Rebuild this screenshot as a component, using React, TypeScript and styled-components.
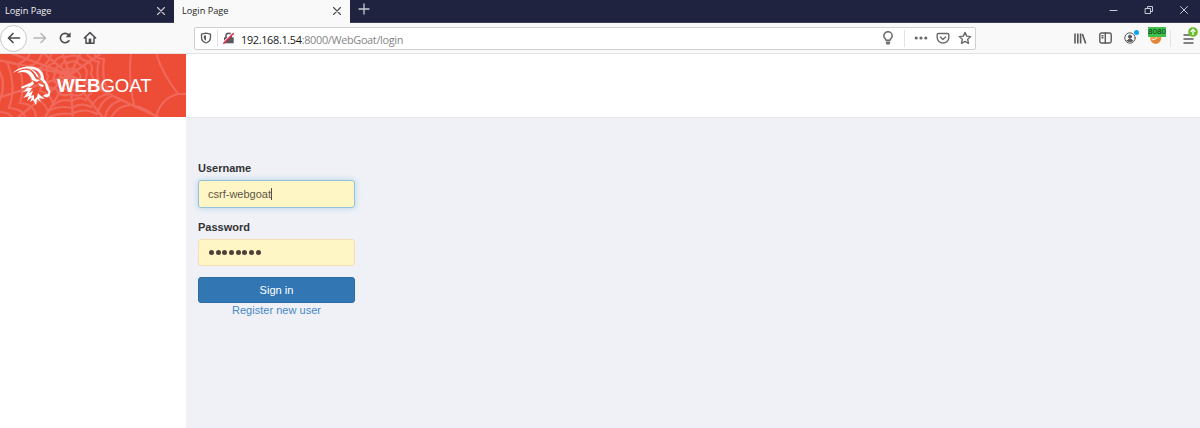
import React from 'react';
import styled, { createGlobalStyle } from 'styled-components';

const GlobalStyle = createGlobalStyle`
  *, *::before, *::after { box-sizing: border-box; }
  body { margin: 0; background: #fff; font-family: "Liberation Sans", Arial, sans-serif; }
  svg { display: block; flex: none; }
`;

const Window = styled.div`
  display: flex;
  flex-direction: column;
  width: 1200px;
  height: 428px;
  overflow: hidden;
`;

const TabBar = styled.div`
  display: flex;
  height: 23px;
  flex: none;
  background: #20233f;
  border-bottom: 1px solid #3c3e56;
`;

const Tab = styled.div<{ $active?: boolean }>`
  display: flex;
  align-items: center;
  justify-content: space-between;
  width: ${p => (p.$active ? 176 : 174)}px;
  height: 23px;
  padding: 0 8px 2px ${p => (p.$active ? 8 : 5)}px;
  background: ${p => (p.$active ? '#f9f9fa' : 'transparent')};
  color: ${p => (p.$active ? '#1c1c22' : '#f2f2f6')};
  font: 9.2px "Open Sans", sans-serif;
`;

const TabClose = styled.span<{ $active?: boolean }>`
  color: ${p => (p.$active ? '#4c4c50' : '#c9cad3')};
`;

const NewTab = styled.div`
  display: flex;
  padding: 3px 0 0 8px;
  color: #c9cad3;
`;

const WindowControls = styled.div`
  display: flex;
  align-items: center;
  gap: 25px;
  height: 19px;
  margin-left: auto;
  padding-right: 11px;
  color: #c9cad3;
`;

const Toolbar = styled.div`
  display: flex;
  align-items: center;
  height: 31px;
  flex: none;
  background: #f9f9fa;
  border-bottom: 1px solid #e3e3e5;
  color: #5a5a5d;
`;

const NavButtons = styled.div`
  display: flex;
  align-items: center;
  width: 194px;
  color: #4c4c50;
`;

const BackButton = styled.div`
  display: flex;
  align-items: center;
  justify-content: center;
  width: 27px;
  height: 27px;
  border: 1px solid #c6c6c8;
  border-radius: 50%;
  background: #fff;
`;

const NavIcon = styled.div<{ $left: number; $faded?: boolean }>`
  margin-left: ${p => p.$left}px;
  color: ${p => (p.$faded ? '#b5b5b8' : 'inherit')};
`;

const AddressBar = styled.div`
  display: flex;
  align-items: center;
  width: 782px;
  height: 23px;
  padding: 0 3px 0 5px;
  background: #fff;
  border: 1px solid #cfcfd1;
  border-radius: 2px;
`;

const Divider = styled.span<{ $margin: string }>`
  width: 1px;
  height: 17px;
  margin: ${p => p.$margin};
  background: #e3e3e5;
`;

const Url = styled.span`
  margin-left: 7px;
  padding-top: 2px;
  color: #858588;
  font: 10.9px "Open Sans", sans-serif;
  line-height: 15px;
  letter-spacing: -0.33px;
  white-space: nowrap;
`;

const Host = styled.span`
  color: #17171a;
`;

const PageActions = styled.div`
  display: flex;
  align-items: center;
  margin-left: auto;
  color: #6a6a6d;
`;

const Actions = styled.div`
  display: flex;
  align-items: center;
  gap: 12px;
  margin-left: auto;
  padding-right: 6px;
`;

const BadgeHost = styled.div`
  position: relative;
`;

const PortBadge = styled.span`
  position: absolute;
  top: -5px;
  left: 0;
  width: 18px;
  height: 10px;
  background: #3fc04c;
  color: #0c3311;
  font: 8px/10px "Liberation Sans", sans-serif;
  text-align: center;
`;

const Dot = styled.span`
  position: absolute;
  top: -2px;
  right: -3px;
  width: 5px;
  height: 5px;
  border-radius: 50%;
  background: #0aa5f7;
`;

const UpdateBadge = styled.span`
  position: absolute;
  top: -6px;
  right: -4px;
`;

const Page = styled.div`
  display: grid;
  grid-template: 63px 1fr / 186px 1fr;
  flex: 1;
  background: #fff;
`;

const Brand = styled.div`
  display: grid;
  grid-template: 100% / 100%;
  background: #ed4c37;
  overflow: hidden;

  & > * { grid-area: 1 / 1; }
`;

const BrandRow = styled.div`
  display: flex;
  align-items: center;
  z-index: 1;
  padding-left: 11px;
  color: #fff;
`;

const BrandName = styled.span`
  margin-left: 5px;
  padding-top: 1px;
  font-size: 18.6px;
  line-height: 22px;
`;

const Header = styled.div`
  background: #fff;
`;

const Sidebar = styled.div`
  background: #fff;
`;

const Main = styled.main`
  padding: 44px 0 0 12px;
  border-top: 1px solid #e9eaf0;
  background: #f0f1f7;
`;

const Form = styled.form`
  display: flex;
  flex-direction: column;
  width: 157px;
`;

const Label = styled.label`
  height: 18px;
  color: #333;
  font: bold 11px/13px "Liberation Sans", sans-serif;
`;

const Field = styled.div<{ $focused?: boolean }>`
  display: flex;
  align-items: center;
  height: ${p => (p.$focused ? 28 : 27)}px;
  margin-bottom: ${p => (p.$focused ? 13 : 11)}px;
  padding: 0 9px 1px;
  border: 1px solid ${p => (p.$focused ? '#8fc3dc' : '#f3dfb4')};
  border-radius: 3px;
  background: #fff5c5;
  box-shadow: ${p => (p.$focused ? '0 0 6px rgba(102, 175, 215, .45)' : 'none')};
  color: #5e5546;
  font-size: 11px;
`;

const Caret = styled.span`
  width: 1px;
  height: 12px;
  background: #55504a;
`;

const Bullets = styled.span`
  display: flex;
  gap: 1.7px;
  padding: 1px 0 0 1px;
`;

const Bullet = styled.i`
  width: 5px;
  height: 5px;
  border-radius: 50%;
  background: #4e4237;
`;

const SignIn = styled.button`
  height: 26px;
  padding: 0;
  border: 1px solid #2d6ca3;
  border-radius: 3px;
  background: #3277b3;
  color: #fff;
  font: 11.1px "Liberation Sans", sans-serif;
`;

const Register = styled.a`
  color: #4688c7;
  font-size: 11.05px;
  line-height: 15px;
  text-align: center;
`;

type IconProps = { w?: number; h?: number; sw?: number; children: React.ReactNode };

const Icon = ({ w = 14, h = 14, sw = 1.5, children }: IconProps) => (
  <svg width={w} height={h} viewBox={`0 0 ${w} ${h}`} fill="none" stroke="currentColor"
    strokeWidth={sw} strokeLinecap="round" strokeLinejoin="round">{children}</svg>
);

const Cross = () => <Icon w={10} h={10} sw={1.1}><path d="M1.5 1.5l7 7M8.5 1.5l-7 7" /></Icon>;

const Web = () => (
  <svg width="186" height="63" viewBox="0 0 186 63" fill="none" stroke="#f0695a" strokeWidth="2.2" strokeLinecap="round">
    <path d="M70 21L-2 6M70 21L8-2M70 21L42-2M70 21L62-2M70 21L81-2M70 21L103-2M70 21L134 52L158 63M70 21L104 65M70 21L73 65M70 21L44 65M70 21L16 65M70 21L-2 44" strokeWidth="2.4" />
    <path d="M70 15Q75 13 78 18Q83 23 78 26Q76 31 70 29Q64 30 63 25Q58 22 63 18Q65 13 70 15Z" />
    <path d="M68 9Q75 5 80 11Q89 13 86 23Q89 31 80 32Q76 39 69 35Q61 37 59 30Q51 28 55 20Q53 13 61 12Q63 6 68 9Z" />
    <path d="M66 3Q78-1 83 6Q95 8 91 20Q98 31 87 35Q81 45 71 40Q60 44 56 35Q44 34 48 22Q43 12 54 9Q58 1 66 3Z" />
    <path d="M86-1Q91 6 99 8Q95 20 101 35Q91 35 86 46Q79 42 72 47Q61 44 54 51Q50 39 40 37Q43 26 37 15Q48 12 52-1" />
    <path d="M94-1Q96 5 104 5Q101 24 109 40Q97 41 91 53Q81 48 72 54Q59 51 48 57Q44 46 30 43Q35 29 28 12Q39 11 42-1" />
    <path d="M112 42Q101 46 97 60Q84 53 72 60Q57 58 45 65M36 63Q35 50 20 49Q26 31 18 10Q28 6 30-1M121 46Q106 51 105 65M25 64Q24 55 9 54Q17 32 7 8M12 64Q10 58-1 58M-2 51Q8 29-2 15" />
    <path d="M131-1Q128 25 134 51Q118 50 111 64M156-1Q162 19 178 40Q161 44 156 63Q145 53 134 52M178 40H187" strokeWidth="2" />
  </svg>
);

const Goat = () => (
  <svg width="41" height="41" viewBox="0 0 41 41" fill="#fff">
    <path d="M2 8C7 2 18 0 26 3C31 5 33 9 33 15L30 14C30 9 28 6 23 4.5C15 2 8 4 2 8Z" />
    <path d="M6 8C11 3 19 4 22 9L25 14L29 15L26 17L21 15C19 9 14 5 6 8Z" />
    <path d="M17 3C22 4 27 8 28 13L26 12C24 8 21 5 17 3Z" />
    <path d="M28 13L33 14L36 18L38 23L39.5 27L38.5 31L36 32.5L32 31L34 29.5L37 29L37.5 27L35 24L34 19L31 16Z" />
    <path d="M22 16L19 18L10 22L11 23.5L18 21L13 26L10 27.5L17 26L14 31L12 33L18 31L16 36L21 32L19 37L22 35L25 40L26 34L30 37L28 33L34 34L30 31L27 28L26 32L23 35L23 30L20 31L22 26L18 28L21 23L17 23L23 19Z" />
    <path d="M27 18L33 20.5L32 22L29 21Z" />
  </svg>
);

export default function App() {
  return (
    <>
      <GlobalStyle />
      <Window>
        <TabBar>
          <Tab><span>Login Page</span><TabClose><Cross /></TabClose></Tab>
          <Tab $active><span>Login Page</span><TabClose $active><Cross /></TabClose></Tab>
          <NewTab><Icon w={12} h={12} sw={1.3}><path d="M6 1v10M1 6h10" /></Icon></NewTab>
          <WindowControls>
            <Icon w={10} h={10} sw={1}><path d="M1 5.5h7" /></Icon>
            <Icon w={10} h={10} sw={1}><path d="M1.5 3.5h5v5h-5zM3.5 3V1.5h5v5H7" /></Icon>
            <Icon w={10} h={10} sw={1}><path d="M1.5 1.5l7 7M8.5 1.5l-7 7" /></Icon>
          </WindowControls>
        </TabBar>

        <Toolbar>
          <NavButtons>
            <BackButton><Icon w={14} h={12} sw={1.7}><path d="M12.5 6H1.5M6 1.5L1.5 6L6 10.5" /></Icon></BackButton>
            <NavIcon $left={6} $faded><Icon w={14} h={12}><path d="M1 6h11.5M8 1.5L12.5 6L8 10.5" /></Icon></NavIcon>
            <NavIcon $left={11}>
              <Icon w={14} h={14} sw={1.7}><path d="M10.9 9.8A4.7 4.7 0 1 1 10.6 3.9" /><path d="M12.6 1.2V6.2H7.6Z" fill="currentColor" stroke="none" /></Icon>
            </NavIcon>
            <NavIcon $left={11}>
              <Icon w={14} h={14} sw={1.5}><path d="M1.3 7L7 1.6L12.7 7M3 6.7v5.6h8V6.7" /><path d="M5.7 12V7.6h2.6V12Z" fill="currentColor" stroke="none" /></Icon>
            </NavIcon>
          </NavButtons>

          <AddressBar>
            <Icon w={12} h={12} sw={1.3}><path d="M6 1.1L10.5 2.1V5.5C10.5 8.2 8.8 10 6 11C3.2 10 1.5 8.2 1.5 5.5V2.1Z" /><path d="M6 3.2V8.7C4.4 7.8 3.8 7 3.8 5.3V3.7Z" fill="currentColor" stroke="none" /></Icon>
            <Divider $margin="0 5px 0 5px" />
            <Icon w={11} h={12} sw={1.5}>
              <path d="M3 6V3.8a2.6 2.6 0 0 1 5.2 0V6" /><path d="M1 5.3h9.7V11.3H1z" fill="currentColor" stroke="none" />
              <path d="M.6 10.4L10 .8" stroke="#fff" strokeWidth="1.6" /><path d="M.8 11.2L10.4 1.5" stroke="#ec2350" strokeWidth="1.6" />
            </Icon>
            <Url><Host>192.168.1.54</Host>:8000/WebGoat/login</Url>
            <PageActions>
              <Icon w={12} h={14} sw={1.5}><path d="M4 9.3C4 7.8 1.8 7.2 1.8 4.9a4.2 4.2 0 0 1 8.4 0C10.2 7.2 8 7.8 8 9.3Z" /><path d="M4.4 11.3h3.2M4.8 12.8h2.4" /></Icon>
              <Divider $margin="0 9px 0 10px" />
              <Icon w={14} h={4}><g fill="currentColor" stroke="none"><circle cx="2.2" cy="2" r="1.6" /><circle cx="7" cy="2" r="1.6" /><circle cx="11.8" cy="2" r="1.6" /></g></Icon>
              <NavIcon $left={8}><Icon w={14} h={13} sw={1.4}><path d="M2.2 1.5h9.6q1 0 1 1v3.1a5.8 5.4 0 0 1-11.6 0V2.5q0-1 1-1ZM4.4 5L7 7.4L9.6 5" /></Icon></NavIcon>
              <NavIcon $left={8}><Icon w={14} h={14} sw={1.4}><path d="M7 1.4l1.7 3.7 4 .5-3 2.7.8 4L7 10.4l-3.5 1.9.8-4-3-2.7 4-.5Z" /></Icon></NavIcon>
            </PageActions>
          </AddressBar>

          <Actions>
            <Icon w={14} h={13} sw={1.6}><path d="M2 1.5v10M4.8 1.5v10M7.6 1.5v10M9.4 2l3.3 9.5" strokeLinecap="butt" /></Icon>
            <Icon w={13} h={12} sw={1.4}><rect x=".8" y="1" width="11.4" height="10" rx="1.7" /><path d="M6.3 1v10M3 3.7h1M3 5.7h1" /></Icon>
            <BadgeHost>
              <Icon w={12} h={12} sw={1}><circle cx="6" cy="6" r="5.2" /><circle cx="6" cy="4.7" r="1.6" fill="currentColor" /><path d="M3.1 8.8Q3.6 7.4 6 7.4T8.9 8.8Q6 10.6 3.1 8.8Z" fill="currentColor" /></Icon>
              <Dot />
            </BadgeHost>
            <BadgeHost>
              <svg width="14" height="13" viewBox="-1 0 14 13"><circle cx="6.8" cy="6.2" r="5.5" fill="#f1a04d" /><path d="M1.3 7Q3 10 7 7.5T12 6Q11 11.6 6.5 11.8Q2 11 1.3 7Z" fill="#e58338" /><path d="M3 7.5Q5.5 8.5 8 5.5" stroke="#fff0cb" fill="none" /></svg>
              <PortBadge>8080</PortBadge>
            </BadgeHost>
            <Divider $margin="0 0 0 -4px" />
            <BadgeHost>
              <Icon w={11} h={11} sw={1.5}><path d="M1 2h9M1 6h9M1 10h9" /></Icon>
              <UpdateBadge><svg width="10" height="10" viewBox="0 0 10 10"><circle cx="5" cy="5" r="4.8" fill="#67bd2c" /><path d="M5 8V2.5M2.7 4.7L5 2.4L7.3 4.7" stroke="#fff" strokeWidth="1.3" fill="none" /></svg></UpdateBadge>
            </BadgeHost>
          </Actions>
        </Toolbar>

        <Page>
          <Brand>
            <Web />
            <BrandRow><Goat /><BrandName><b>WEB</b>GOAT</BrandName></BrandRow>
          </Brand>
          <Header />
          <Sidebar />
          <Main>
            <Form>
              <Label>Username</Label>
              <Field $focused>csrf-webgoat<Caret /></Field>
              <Label>Password</Label>
              <Field><Bullets>{Array.from({ length: 8 }, (_, i) => <Bullet key={i} />)}</Bullets></Field>
              <SignIn type="button">Sign in</SignIn>
              <Register>Register new user</Register>
            </Form>
          </Main>
        </Page>
      </Window>
    </>
  );
}
